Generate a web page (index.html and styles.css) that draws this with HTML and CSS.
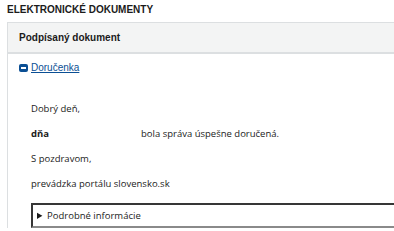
FILE: index.html
```html
<!DOCTYPE html>
<html lang="sk">
<head>
<meta charset="utf-8">
<link rel="stylesheet" href="styles.css">
</head>
<body>
<div class="page">
  <h1 class="title">ELEKTRONICKÉ DOKUMENTY</h1>
  <div class="panel">
    <div class="panel-head">Podpísaný dokument</div>
    <div class="panel-body">
      <a class="toggle" href="#"><span class="icon"></span><span class="toggle-text">Doručenka</span></a>
      <div class="letter">
        <p>Dobrý deň,</p>
        <p><b class="date-label">dňa</b><span class="date-value"></span>bola správa úspešne doručená.</p>
        <p>S pozdravom,</p>
        <p>prevádzka portálu slovensko.sk</p>
        <details class="details">
          <summary>Podrobné informácie</summary>
        </details>
      </div>
    </div>
  </div>
</div>
</body>
</html>
```
FILE: styles.css
```css
html, body {
  margin: 0;
  padding: 0;
  background: #fff;
  overflow: hidden;
}
.page {
  padding: 4px 0 0 7px;
  width: 520px;
  font-family: "Liberation Sans", Arial, sans-serif;
}
.title {
  margin: 0 0 6px 0;
  font-size: 10px;
  line-height: 12px;
  font-weight: bold;
  color: #1b1b1b;
}
.panel {
  border: 1px solid #dcdfe1;
  border-right: none;
  border-bottom: none;
}
.panel-head {
  background: #f3f4f4;
  border-bottom: 2px solid #dcdfe1;
  height: 29px;
  line-height: 30px;
  padding-left: 11px;
  font-size: 10px;
  font-weight: bold;
  color: #1b1b1b;
}
.panel-body {
  padding: 4px 0 0 11px;
}
.toggle {
  display: inline-flex;
  align-items: center;
  gap: 3px;
  color: #0b4f94;
  font-size: 10px;
  text-decoration: none;
  line-height: 12px;
}
.toggle-text {
  text-decoration: underline;
}
.icon {
  width: 9px;
  height: 8px;
  background: #0b4f94;
  border-radius: 2px;
  position: relative;
}
.icon::after {
  content: "";
  position: absolute;
  left: 2px;
  right: 2px;
  top: 3px;
  height: 2px;
  background: #fff;
}
.letter {
  padding: 25px 0 0 12px;
  font-family: "Open Sans", "Noto Sans", sans-serif;
  font-size: 9.5px;
  color: #1b1b1b;
}
.letter p {
  margin: 0 0 10px 0;
  line-height: 15px;
}
.date-label {
  font-weight: bold;
}
.date-value {
  display: inline-block;
  width: 92px;
}
.details {
  margin-top: 12px;
  border: 2px solid #8a8a8a;
  border-style: inset;
  border-right: none;
  height: 21px;
}
.details summary {
  line-height: 21px;
  padding-left: 4px;
  cursor: pointer;
}
```
